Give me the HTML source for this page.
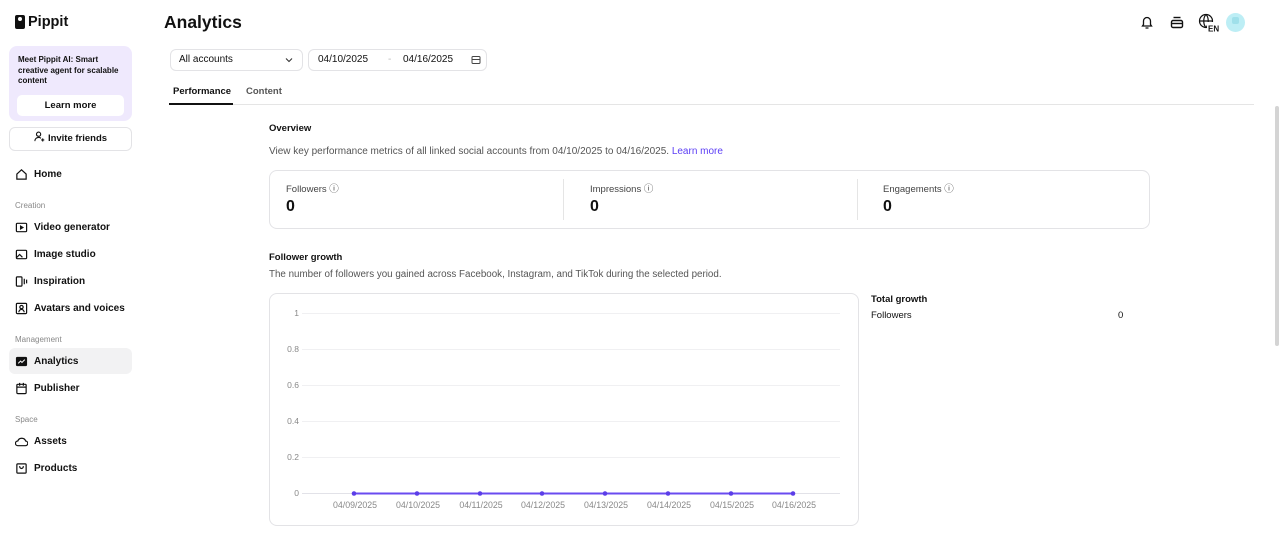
<!DOCTYPE html>
<html><head><meta charset="utf-8"><style>
*{box-sizing:border-box;margin:0;padding:0}
body{width:1280px;height:544px;overflow:hidden;background:#fff;font-family:"Liberation Sans",sans-serif;color:#111;position:relative}
.a{position:absolute}
.nav{position:absolute;left:15px;font-size:10px;font-weight:bold;display:flex;align-items:center;gap:6px}
.nav svg{width:13px;height:13px}
.sec{position:absolute;left:15px;font-size:8px;color:#888}
.t9{font-size:9.5px}
.card{border:1px solid #e3e3e6;border-radius:8px;background:#fff}
.ylab{position:absolute;font-size:8.5px;color:#888;text-align:right;width:20px;left:279px}
.xl{position:absolute;top:500px;font-size:8.8px;color:#888;width:60px;text-align:center}
</style></head><body>
<div class="a" style="left:15px;top:15px;width:10px;height:14px;background:#111;border-radius:2px"></div>
<div class="a" style="left:18px;top:17px;width:4px;height:4px;background:#fff;border-radius:50%"></div>
<div class="a" style="left:28px;top:14px;font-size:14.5px;font-weight:bold">Pippit</div>
<div class="a" style="left:164px;top:12px;font-size:17.5px;font-weight:bold">Analytics</div>
<div class="a" style="left:9px;top:46px;width:123px;height:75px;background:#efe9fd;border-radius:8px"></div>
<div class="a" style="left:18px;top:55px;font-size:8px;font-weight:bold;line-height:10.5px;width:110px">Meet Pippit AI: Smart creative agent for scalable content</div>
<div class="a" style="left:17px;top:95px;width:107px;height:21px;background:#fff;border-radius:5px;font-size:9.5px;font-weight:bold;text-align:center;line-height:21px">Learn more</div>
<div class="a card" style="left:9px;top:127px;width:123px;height:24px;border-radius:6px;font-size:9.5px;font-weight:bold;text-align:center;line-height:22px">
<svg width="11" height="11" viewBox="0 0 12 12" style="vertical-align:-1px;margin-right:3px" fill="none" stroke="#111" stroke-width="1.2"><circle cx="5" cy="3.5" r="2.3"/><path d="M1 11c0-2.5 1.8-4 4-4 1 0 2 .3 2.6 1M9.5 8v3.5M7.8 9.7h3.4"/></svg>Invite friends</div>
<div class="nav" style="top:168px"><svg viewBox="0 0 14 14" fill="none" stroke="#111" stroke-width="1.3"><path d="M2 6.5L7 2l5 4.5V12H2z"/></svg>Home</div>
<div class="sec" style="top:201px">Creation</div>
<div class="nav" style="top:221px"><svg viewBox="0 0 14 14" fill="none" stroke="#111" stroke-width="1.3"><rect x="1.5" y="2.5" width="11" height="9" rx="1"/><path d="M6 5.5l2.5 1.5L6 8.5z" fill="#111"/></svg>Video generator</div>
<div class="nav" style="top:248px"><svg viewBox="0 0 14 14" fill="none" stroke="#111" stroke-width="1.3"><rect x="1.5" y="2.5" width="11" height="9" rx="1"/><path d="M2 10l3-3 3 3"/></svg>Image studio</div>
<div class="nav" style="top:275px"><svg viewBox="0 0 14 14" fill="none" stroke="#111" stroke-width="1.3"><rect x="1.5" y="2" width="6" height="10" rx="1"/><path d="M10 4v6M12.5 5v4"/></svg>Inspiration</div>
<div class="nav" style="top:302px"><svg viewBox="0 0 14 14" fill="none" stroke="#111" stroke-width="1.3"><rect x="1.5" y="1.5" width="11" height="11" rx="1"/><circle cx="7" cy="5.5" r="1.8"/><path d="M4 11c.5-2 1.5-3 3-3s2.5 1 3 3"/></svg>Avatars and voices</div>
<div class="sec" style="top:335px">Management</div>
<div class="a" style="left:9px;top:348px;width:123px;height:26px;background:#f2f2f3;border-radius:6px"></div>
<div class="nav" style="top:355px"><svg viewBox="0 0 14 14"><rect x="1" y="2" width="12" height="10" rx="1.5" fill="#111"/><path d="M3.5 9l2.5-2.5 1.5 1.5 3-3" stroke="#fff" stroke-width="1.1" fill="none"/></svg>Analytics</div>
<div class="nav" style="top:382px"><svg viewBox="0 0 14 14" fill="none" stroke="#111" stroke-width="1.3"><rect x="2" y="2.5" width="10" height="10" rx="1"/><path d="M2 5.5h10M5 1v3M9 1v3"/></svg>Publisher</div>
<div class="sec" style="top:415px">Space</div>
<div class="nav" style="top:435px"><svg viewBox="0 0 14 14" fill="none" stroke="#111" stroke-width="1.3"><path d="M3 11.5h8a2.5 2.5 0 0 0 .5-5A4.5 4.5 0 0 0 3 6.5a2.5 2.5 0 0 0 0 5z"/></svg>Assets</div>
<div class="nav" style="top:462px"><svg viewBox="0 0 14 14" fill="none" stroke="#111" stroke-width="1.3"><rect x="2" y="2" width="10" height="10" rx="1"/><path d="M5 4.5c0 1.5 1 2.5 2 2.5s2-1 2-2.5"/></svg>Products</div>
<svg class="a" style="left:1139px;top:14px" width="16" height="16" viewBox="0 0 16 16" fill="none" stroke="#111" stroke-width="1.3"><path d="M3.5 12h9l-1-1.5V7a3.5 3.5 0 0 0-7 0v3.5zM6.5 14h3"/></svg>
<svg class="a" style="left:1169px;top:14px" width="16" height="16" viewBox="0 0 16 16" fill="none" stroke="#111" stroke-width="1.4"><path d="M4.5 3.5h7"/><rect x="2.5" y="6.5" width="11" height="7" rx="1.5"/><path d="M2.5 9.5h11"/></svg>
<svg class="a" style="left:1198px;top:13px" width="22" height="20" viewBox="0 0 22 20" fill="none" stroke="#111" stroke-width="1.2"><circle cx="8" cy="8" r="6.5"/><path d="M1.5 8h13M8 1.5c-3 3-3 10 0 13M8 1.5c3 3 3 10 0 13"/><rect x="9" y="9" width="13" height="11" fill="#fff" stroke="none"/><text x="10" y="18.5" font-size="8" font-weight="bold" fill="#111" stroke="none" font-family="Liberation Sans">EN</text></svg>
<div class="a" style="left:1226px;top:13px;width:19px;height:19px;border-radius:50%;background:#bdeef5"></div>
<div class="a" style="left:1232px;top:17px;width:7px;height:7px;border-radius:2px;background:#9fe0ea"></div>
<div class="a card" style="left:170px;top:49px;width:133px;height:22px;border-radius:6px;font-size:10px;line-height:20px;padding-left:8px">All accounts<svg style="position:absolute;right:9px;top:7px" width="8" height="6" viewBox="0 0 8 6" fill="none" stroke="#333" stroke-width="1.1"><path d="M1 1.5l3 3 3-3"/></svg></div>
<div class="a card" style="left:308px;top:49px;width:179px;height:22px;border-radius:6px;font-size:10px;line-height:20px">
<span class="a" style="left:9px">04/10/2025</span><span class="a" style="left:79px;color:#bbb">-</span><span class="a" style="left:94px">04/16/2025</span>
<svg class="a" style="left:162px;top:5px" width="10" height="10" viewBox="0 0 10 10" fill="none" stroke="#444" stroke-width="1"><rect x="1" y="1.5" width="8" height="7" rx="1"/><path d="M1 4.5h8"/></svg></div>
<div class="a" style="left:173px;top:86px;font-size:9.5px;font-weight:bold">Performance</div>
<div class="a" style="left:246px;top:86px;font-size:9.5px;color:#555;font-weight:bold">Content</div>
<div class="a" style="left:169px;top:104px;width:1085px;height:1px;background:#e5e5e5"></div>
<div class="a" style="left:169px;top:103px;width:64px;height:2px;background:#111"></div>
<div class="a" style="left:1275px;top:106px;width:4px;height:240px;background:#d4d4d4;border-radius:2px"></div>
<div class="a" style="left:269px;top:123px;font-size:9.5px;font-weight:bold">Overview</div>
<div class="a" style="left:269px;top:146px;color:#555;font-size:10px">View key performance metrics of all linked social accounts from 04/10/2025 to 04/16/2025. <span style="color:#5b3df5">Learn more</span></div>
<div class="a card" style="left:269px;top:170px;width:881px;height:59px"></div>
<div class="a" style="left:563px;top:179px;width:1px;height:41px;background:#e5e5e5"></div>
<div class="a" style="left:857px;top:179px;width:1px;height:41px;background:#e5e5e5"></div>
<div class="a t9" style="left:286px;top:181px;color:#444">Followers ⓘ</div>
<div class="a t9" style="left:590px;top:181px;color:#444">Impressions ⓘ</div>
<div class="a t9" style="left:883px;top:181px;color:#444">Engagements ⓘ</div>
<div class="a" style="left:286px;top:198px;font-size:16px;font-weight:bold">0</div>
<div class="a" style="left:590px;top:198px;font-size:16px;font-weight:bold">0</div>
<div class="a" style="left:883px;top:198px;font-size:16px;font-weight:bold">0</div>
<div class="a" style="left:269px;top:252px;font-size:9.5px;font-weight:bold">Follower growth</div>
<div class="a" style="left:269px;top:269px;color:#555;font-size:9.8px">The number of followers you gained across Facebook, Instagram, and TikTok during the selected period.</div>
<div class="a card" style="left:269px;top:293px;width:590px;height:233px"></div>
<svg class="a" style="left:0;top:0" width="1280" height="544">
<g stroke="#f0f0f2" stroke-width="1"><path d="M302 313.5H840M302 349.5H840M302 385.5H840M302 421.5H840M302 457.5H840"/></g>
<path d="M302 493.5H840" stroke="#e2e2e8"/>
<path d="M354 493.5H793" stroke="#6a4bf0" stroke-width="2"/>
<g fill="#5b3de8"><circle cx="354" cy="493.5" r="2.3"/><circle cx="417" cy="493.5" r="2.3"/><circle cx="480" cy="493.5" r="2.3"/><circle cx="542" cy="493.5" r="2.3"/><circle cx="605" cy="493.5" r="2.3"/><circle cx="668" cy="493.5" r="2.3"/><circle cx="731" cy="493.5" r="2.3"/><circle cx="793" cy="493.5" r="2.3"/></g>
</svg>
<div class="ylab" style="top:308px">1</div><div class="ylab" style="top:344px">0.8</div><div class="ylab" style="top:380px">0.6</div><div class="ylab" style="top:416px">0.4</div><div class="ylab" style="top:452px">0.2</div><div class="ylab" style="top:488px">0</div>
<div class="xl" style="left:325px">04/09/2025</div><div class="xl" style="left:388px">04/10/2025</div><div class="xl" style="left:451px">04/11/2025</div><div class="xl" style="left:513px">04/12/2025</div><div class="xl" style="left:576px">04/13/2025</div><div class="xl" style="left:639px">04/14/2025</div><div class="xl" style="left:702px">04/15/2025</div><div class="xl" style="left:764px">04/16/2025</div>
<div class="a" style="left:871px;top:294px;font-size:9.5px;font-weight:bold">Total growth</div>
<div class="a t9" style="left:871px;top:310px">Followers</div>
<div class="a t9" style="left:1118px;top:310px">0</div>
</body></html>
